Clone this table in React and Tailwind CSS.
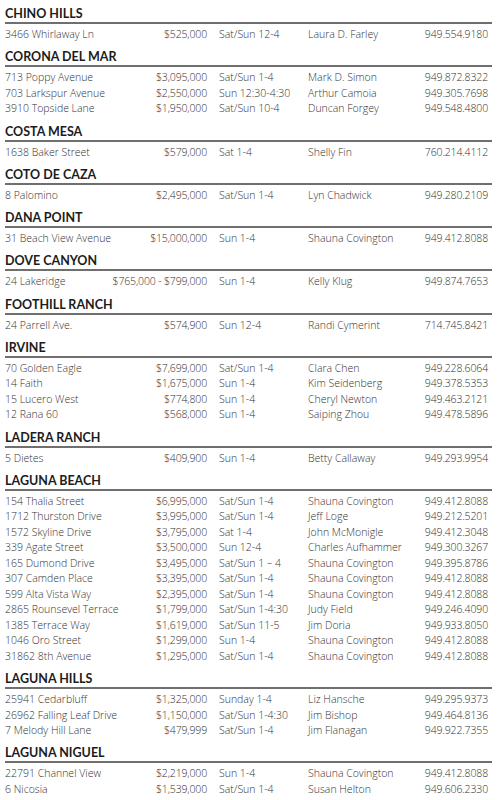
const listings = [
  {
    city: "CHINO HILLS",
    rows: [["3466 Whirlaway Ln", "$525,000", "Sat/Sun 12-4", "Laura D. Farley", "949.554.9180"]],
  },
  {
    city: "CORONA DEL MAR",
    rows: [
      ["713 Poppy Avenue", "$3,095,000", "Sat/Sun 1-4", "Mark D. Simon", "949.872.8322"],
      ["703 Larkspur Avenue", "$2,550,000", "Sun 12:30-4:30", "Arthur Camoia", "949.305.7698"],
      ["3910 Topside Lane", "$1,950,000", "Sat/Sun 10-4", "Duncan Forgey", "949.548.4800"],
    ],
  },
  {
    city: "COSTA MESA",
    rows: [["1638 Baker Street", "$579,000", "Sat 1-4", "Shelly Fin", "760.214.4112"]],
  },
  {
    city: "COTO DE CAZA",
    rows: [["8 Palomino", "$2,495,000", "Sat/Sun 1-4", "Lyn Chadwick", "949.280.2109"]],
  },
  {
    city: "DANA POINT",
    rows: [["31 Beach View Avenue", "$15,000,000", "Sun 1-4", "Shauna Covington", "949.412.8088"]],
  },
  {
    city: "DOVE CANYON",
    rows: [["24 Lakeridge", "$765,000 - $799,000", "Sun 1-4", "Kelly Klug", "949.874.7653"]],
  },
  {
    city: "FOOTHILL RANCH",
    rows: [["24 Parrell Ave.", "$574,900", "Sun 12-4", "Randi Cymerint", "714.745.8421"]],
  },
  {
    city: "IRVINE",
    rows: [
      ["70 Golden Eagle", "$7,699,000", "Sat/Sun 1-4", "Clara Chen", "949.228.6064"],
      ["14 Faith", "$1,675,000", "Sun 1-4", "Kim Seidenberg", "949.378.5353"],
      ["15 Lucero West", "$774,800", "Sun 1-4", "Cheryl Newton", "949.463.2121"],
      ["12 Rana 60", "$568,000", "Sun 1-4", "Saiping Zhou", "949.478.5896"],
    ],
  },
  {
    city: "LADERA RANCH",
    rows: [["5 Dietes", "$409,900", "Sun 1-4", "Betty Callaway", "949.293.9954"]],
  },
  {
    city: "LAGUNA BEACH",
    rows: [
      ["154 Thalia Street", "$6,995,000", "Sat/Sun 1-4", "Shauna Covington", "949.412.8088"],
      ["1712 Thurston Drive", "$3,995,000", "Sat/Sun 1-4", "Jeff Loge", "949.212.5201"],
      ["1572 Skyline Drive", "$3,795,000", "Sat 1-4", "John McMonigle", "949.412.3048"],
      ["339 Agate Street", "$3,500,000", "Sun 12-4", "Charles Aufhammer", "949.300.3267"],
      ["165 Dumond Drive", "$3,495,000", "Sat/Sun 1 – 4", "Shauna Covington", "949.395.8786"],
      ["307 Camden Place", "$3,395,000", "Sat/Sun 1-4", "Shauna Covington", "949.412.8088"],
      ["599 Alta Vista Way", "$2,395,000", "Sat/Sun 1-4", "Shauna Covington", "949.412.8088"],
      ["2865 Rounsevel Terrace", "$1,799,000", "Sat/Sun 1-4:30", "Judy Field", "949.246.4090"],
      ["1385 Terrace Way", "$1,619,000", "Sat/Sun 11-5", "Jim Doria", "949.933.8050"],
      ["1046 Oro Street", "$1,299,000", "Sun 1-4", "Shauna Covington", "949.412.8088"],
      ["31862 8th Avenue", "$1,295,000", "Sat/Sun 1-4", "Shauna Covington", "949.412.8088"],
    ],
  },
  {
    city: "LAGUNA HILLS",
    rows: [
      ["25941 Cedarbluff", "$1,325,000", "Sunday 1-4", "Liz Hansche", "949.295.9373"],
      ["26962 Falling Leaf Drive", "$1,150,000", "Sat/Sun 1-4:30", "Jim Bishop", "949.464.8136"],
      ["7 Melody Hill Lane", "$479,999", "Sat/Sun 1-4", "Jim Flanagan", "949.922.7355"],
    ],
  },
  {
    city: "LAGUNA NIGUEL",
    rows: [
      ["22791 Channel View", "$2,219,000", "Sun 1-4", "Shauna Covington", "949.412.8088"],
      ["6 Nicosia", "$1,539,000", "Sat/Sun 1-4", "Susan Helton", "949.606.2330"],
    ],
  },
];

function Section({ city, rows }) {
  return (
    <div className="mb-[6.75px]">
      {/* city heading with rule */}
      <div className="h-[18px] border-b-2 border-[#6f6f6f] font-['Lato',sans-serif] text-[12.5px] leading-[16px] font-bold text-[#1c1c1c]">
        {city}
      </div>
      <div className="mt-[3px]">
        {rows.map((r, i) => (
          <div
            key={i}
            className="grid grid-cols-[107px_95px_101px_110px_1fr] font-['Open_Sans',sans-serif] font-light text-[10.5px] leading-[15.5px] text-[#333] whitespace-nowrap"
          >
            <div>{r[0]}</div>
            <div className="text-right tracking-[-0.15px]">{r[1]}</div>
            <div className="pl-[12px]">{r[2]}</div>
            <div>{r[3]}</div>
            <div className="text-right pr-[4px] tracking-[-0.15px]">{r[4]}</div>
          </div>
        ))}
      </div>
    </div>
  );
}

export default function App() {
  return (
    <div className="w-[497px] h-[800px] overflow-hidden bg-white pl-[5px] pr-[5px] pt-[6px]">
      {listings.map((s) => (
        <Section key={s.city} city={s.city} rows={s.rows} />
      ))}
    </div>
  );
}
